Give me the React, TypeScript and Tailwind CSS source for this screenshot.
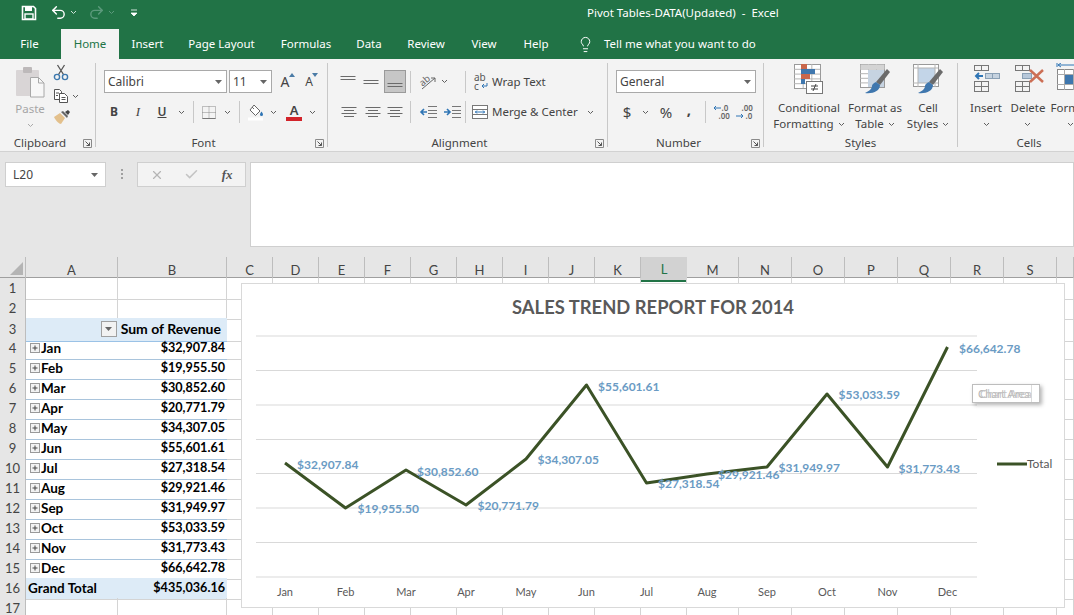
import React from "react";
import { Lightbulb, Redo2, Undo2, X, Check } from "lucide-react";

const pivotRows = [
  ["Jan", "$32,907.84"],
  ["Feb", "$19,955.50"],
  ["Mar", "$30,852.60"],
  ["Apr", "$20,771.79"],
  ["May", "$34,307.05"],
  ["Jun", "$55,601.61"],
  ["Jul", "$27,318.54"],
  ["Aug", "$29,921.46"],
  ["Sep", "$31,949.97"],
  ["Oct", "$53,033.59"],
  ["Nov", "$31,773.43"],
  ["Dec", "$66,642.78"],
];

const columns = ["A", "B", "C", "D", "E", "F", "G", "H", "I", "J", "K", "L", "M", "N", "O", "P", "Q", "R", "S", ""];

// точки графика в координатах страницы
const points = [
  { m: "Jan", x: 285, y: 463, lx: 297, ly: 469, t: "$32,907.84" },
  { m: "Feb", x: 345.5, y: 508, lx: 357.5, ly: 513, t: "$19,955.50" },
  { m: "Mar", x: 406, y: 470, lx: 417, ly: 476, t: "$30,852.60" },
  { m: "Apr", x: 466, y: 505, lx: 477.5, ly: 510, t: "$20,771.79" },
  { m: "May", x: 526, y: 459, lx: 537.5, ly: 464, t: "$34,307.05" },
  { m: "Jun", x: 586.5, y: 385, lx: 598, ly: 391, t: "$55,601.61" },
  { m: "Jul", x: 646.5, y: 483, lx: 658, ly: 488, t: "$27,318.54" },
  { m: "Aug", x: 707, y: 474, lx: 718, ly: 479, t: "$29,921.46" },
  { m: "Sep", x: 767, y: 467, lx: 778.5, ly: 472, t: "$31,949.97" },
  { m: "Oct", x: 827, y: 394, lx: 838.5, ly: 399, t: "$53,033.59" },
  { m: "Nov", x: 887.5, y: 467, lx: 898.5, ly: 473, t: "$31,773.43" },
  { m: "Dec", x: 947.5, y: 347, lx: 959, ly: 353, t: "$66,642.78" },
];

const gridLines = [336, 370.5, 405, 439.5, 473.5, 508, 542.5, 577];

const Chev = ({ c = "#5f5f5f" }: { c?: string }) => (
  <svg width="7" height="5" viewBox="0 0 7 5" className="shrink-0">
    <path d="M1 1l2.5 2.5L6 1" fill="none" stroke={c} strokeWidth="1" />
  </svg>
);

const ComboArrow = () => (
  <svg width="7" height="4" viewBox="0 0 7 4" className="shrink-0">
    <path d="M0 0h7L3.5 4z" fill="#666" />
  </svg>
);

const Launcher = () => (
  <svg width="9" height="9" viewBox="0 0 9 9" className="absolute right-[3px] top-[4px]">
    <path d="M.5 8.5v-8h8v8z" fill="none" stroke="#8a8a8a" />
    <path d="M2.5 2.5l4 4M3.5 6.5h3v-3" fill="none" stroke="#555" />
  </svg>
);

const Sep = () => <div className="h-[22px] w-px shrink-0 bg-[#c8c8c8]" />;

const GroupSep = () => <div className="mt-[4px] h-[84px] w-px shrink-0 bg-[#c8c8c8]" />;

const Lines = ({ rows }: { rows: [number, number][] }) => (
  <svg width="18" height="14" viewBox="0 0 18 14">
    {rows.map(([y, w], i) => (
      <path key={i} d={`M${(18 - w) / 2} ${y}.5h${w}`} stroke="#6a6a6a" />
    ))}
  </svg>
);

const Indent = ({ right }: { right?: boolean }) => (
  <svg width="18" height="12" viewBox="0 0 18 12">
    <path d="M9 .5h9M9 4.5h9M9 7.5h9M9 11.5h9" stroke="#777" />
    {right ? (
      <path d="M1 6h5M4 3l3 3-3 3" fill="none" stroke="#2f75b5" strokeWidth="1.6" />
    ) : (
      <path d="M8 6H3M5 3L2 6l3 3" fill="none" stroke="#2f75b5" strokeWidth="1.6" />
    )}
  </svg>
);

const GroupLabel = ({ label, launcher, className = "" }: { label: string; launcher?: boolean; className?: string }) => (
  <div className={`relative h-[16px] text-center text-[11.5px] leading-[16px] text-[#444] ${className}`}>
    {label}
    {launcher && <Launcher />}
  </div>
);

const PasteIcon = () => (
  <svg width="30" height="32" viewBox="0 0 30 32">
    <rect x="1" y="4" width="23" height="26" rx="1" fill="#d9d5d6" />
    <rect x="8" y="1" width="9" height="6" rx="1" fill="#bdb9ba" />
    <path d="M15.5 11.5h8l5.500 5.500v14h-13.500z" fill="#f7f7f7" stroke="#a8a8a8" />
    <path d="M23.500 11.500v5.500h5.500" fill="none" stroke="#a8a8a8" />
  </svg>
);

const ScissorsIcon = () => (
  <svg width="16" height="17" viewBox="0 0 16 17">
    <path d="M5.500 10.500L11.500 1M10.500 10.500L4.500 1" fill="none" stroke="#555" strokeWidth="1.300" />
    <circle cx="4" cy="13" r="2.600" fill="none" stroke="#3d78ad" strokeWidth="1.400" />
    <circle cx="12" cy="13" r="2.600" fill="none" stroke="#3d78ad" strokeWidth="1.400" />
  </svg>
);

const CopyIcon = () => (
  <svg width="16" height="16" viewBox="0 0 16 16">
    <path d="M1.500 1.500h5l2 2v8h-7z" fill="#fff" stroke="#555" />
    <path d="M6.500 5.500h5l3 3v6h-8z" fill="#fff" stroke="#555" />
    <path d="M3 5h3M3 7.500h2M8.500 9.500h4M8.500 11.500h4" stroke="#555" />
  </svg>
);

const BrushIcon = () => (
  <svg width="18" height="16" viewBox="0 0 18 16">
    <path d="M1 8l6-4 5 5-4 6c-2 0-5-3-7-7z" fill="#e3c08c" />
    <path d="M8 3l2-1 5 5-1 2z" fill="#666" />
    <path d="M12 3l3-2 2 2-2 3z" fill="#444" />
  </svg>
);

const FillIcon = () => (
  <svg width="17" height="17" viewBox="0 0 17 17">
    <path d="M6 1l6 6-4.500 4.500L2 6z" fill="#fff" stroke="#666" />
    <path d="M4 3l2 2" stroke="#666" />
    <path d="M13.500 7.500c1 1.500 1.500 2.200 1.500 3a1.500 1.500 0 0 1-3 0c0-.8.5-1.500 1.500-3z" fill="#2f75b5" />
    <rect x="0" y="13.500" width="15" height="3" fill="#fff" />
  </svg>
);

const BorderIcon = () => (
  <svg width="14" height="13" viewBox="0 0 14 13">
    <rect x=".5" y=".5" width="13" height="12" fill="none" stroke="#888" strokeDasharray="1 1" />
    <path d="M7 .5v12M.5 6.500h13" stroke="#888" strokeDasharray="1 1" />
    <path d="M.5 12.500h13" stroke="#777" />
  </svg>
);

const OrientIcon = () => (
  <svg width="20" height="16" viewBox="0 0 20 16" className="overflow-visible">
    <text x="3" y="10" fontSize="9.500" fill="#666" transform="rotate(-40 8 8)" fontFamily="Noto Sans, sans-serif">ab</text>
    <path d="M5 15L18 4M14 4h4v4" fill="none" stroke="#666" />
  </svg>
);

const WrapIcon = () => (
  <span className="relative block h-[18px] w-[14px] text-[10px] leading-[9px] text-[#555]">
    ab
    <br />c
    <svg width="7" height="6" viewBox="0 0 7 6" className="absolute left-[7px] top-[10px]">
      <path d="M6 0v3H1M3 1L1 3l2 2" fill="none" stroke="#2f75b5" />
    </svg>
  </span>
);

const MergeIcon = () => (
  <svg width="16" height="14" viewBox="0 0 16 14">
    <rect x=".5" y=".5" width="15" height="13" fill="#fff" stroke="#777" />
    <path d="M.5 4.500h15M.5 9.500h15" stroke="#777" />
    <path d="M3 7h10M5 5.500L3.500 7 5 8.500M11 5.500L12.500 7 11 8.500" fill="none" stroke="#2f75b5" />
  </svg>
);

const DecimalIcon = ({ more }: { more?: boolean }) => (
  <span className="relative block h-[16px] w-[19px] text-[8px] font-semibold leading-[8px] text-[#666]">
    {more ? (
      <>
        <span className="block pl-[9px]">.0</span>
        <span className="block pl-[6px]">.00</span>
        <svg width="8" height="6" viewBox="0 0 8 6" className="absolute left-0 top-[1px]">
          <path d="M8 3H1M3 1L1 3l2 2" fill="none" stroke="#2f75b5" />
        </svg>
      </>
    ) : (
      <>
        <span className="block pl-[6px]">.00</span>
        <span className="block pl-[10px]">.0</span>
        <svg width="8" height="6" viewBox="0 0 8 6" className="absolute left-0 top-[9px]">
          <path d="M0 3h7M5 1l2 2-2 2" fill="none" stroke="#2f75b5" />
        </svg>
      </>
    )}
  </span>
);

const TableGrid = ({ x, y, w, h, cols, rows }: { x: number; y: number; w: number; h: number; cols: number; rows: number }) => (
  <g>
    <rect x={x + 0.5} y={y + 0.5} width={w} height={h} fill="#fff" stroke="#9a9a9a" />
    {Array.from({ length: cols - 1 }).map((_, i) => (
      <path key={i} d={`M${x + 0.5 + ((i + 1) * w) / cols} ${y}v${h}`} stroke="#b5b5b5" />
    ))}
    {Array.from({ length: rows - 1 }).map((_, i) => (
      <path key={i} d={`M${x} ${y + 0.5 + ((i + 1) * h) / rows}h${w}`} stroke="#b5b5b5" />
    ))}
  </g>
);

const CondFormatIcon = () => (
  <svg width="32" height="32" viewBox="0 0 32 32">
    <TableGrid x={1} y={1} w={26} h={24} cols={3} rows={5} />
    <rect x="8" y="1" width="6" height="5" fill="#c9674c" />
    <rect x="8" y="6" width="14" height="5" fill="#3f77ae" />
    <rect x="8" y="11" width="9" height="5" fill="#c9674c" />
    <rect x="8" y="16" width="4" height="5" fill="#3f77ae" />
    <rect x="13.500" y="18.500" width="16" height="12" fill="#fff" stroke="#777" />
    <path d="M18 23h7M18 26h7M23 21l-3 7" fill="none" stroke="#444" />
  </svg>
);

const BrushOverlay = () => (
  <>
    <path d="M28 6L31 9L21 22L17 19z" fill="#6b6b6b" />
    <path d="M17 19L21 22C21 28 14 31 6 30C10 28 13 26 13 23C13 21 15 20 17 19z" fill="#3f77ae" />
  </>
);

const FormatTableIcon = () => (
  <svg width="32" height="32" viewBox="0 0 32 32">
    <TableGrid x={1} y={1} w={24} h={23} cols={3} rows={5} />
    <rect x="1.500" y="1.500" width="24" height="5" fill="#d4d4d4" />
    <rect x="9" y="7" width="16" height="17" fill="#c6d3e1" />
    <BrushOverlay />
  </svg>
);

const CellStylesIcon = () => (
  <svg width="32" height="32" viewBox="0 0 32 32">
    <rect x="1.500" y="1.500" width="25" height="22" fill="#fff" stroke="#9a9a9a" />
    <rect x="6" y="5" width="17" height="15" fill="#c3d5e8" />
    <path d="M6 1v23M1 5h25M1 20h25M23 1v23" stroke="#b5b5b5" fill="none" />
    <BrushOverlay />
  </svg>
);

const InsertIcon = () => (
  <svg width="30" height="32" viewBox="0 0 30 32">
    <rect x="3.500" y="2.500" width="14" height="5" fill="none" stroke="#777" />
    <path d="M10.500 2.500v5" stroke="#777" />
    <rect x="14.500" y="10.500" width="14" height="5" fill="#c5d2df" stroke="#8aa0b5" />
    <path d="M21.500 10.500v5" stroke="#8aa0b5" />
    <path d="M12 13H5M8 10l-3 3 3 3" fill="none" stroke="#2f75b5" strokeWidth="2" />
    <rect x="3.500" y="18.500" width="14" height="10" fill="none" stroke="#777" />
    <path d="M10.500 18.500v10M3.500 23.500h14" stroke="#777" />
  </svg>
);

const DeleteIcon = () => (
  <svg width="32" height="32" viewBox="0 0 32 32">
    <rect x="3.500" y="2.500" width="14" height="5" fill="none" stroke="#777" />
    <path d="M10.500 2.500v5" stroke="#777" />
    <rect x="10.500" y="10.500" width="9" height="5" fill="#b7c8da" stroke="#8aa0b5" />
    <rect x="3.500" y="18.500" width="14" height="10" fill="none" stroke="#777" />
    <path d="M10.500 18.500v10M3.500 23.500h14" stroke="#777" />
    <path d="M18 7l13 12M31 7L18 19" fill="none" stroke="#cc6f55" strokeWidth="2.500" />
  </svg>
);

const FormatIcon = () => (
  <svg width="32" height="32" viewBox="0 0 32 32">
    <path d="M3 0v4M4 2h26M4 2l3-2M4 2l3 2" fill="none" stroke="#2f75b5" />
    <rect x="3.500" y="6.500" width="28" height="20" fill="#fff" stroke="#888" />
    <rect x="11" y="11" width="8" height="10" fill="#3f77ae" />
    <path d="M10.500 6v21M19.500 6v21M3 11.500h28M3 21.500h28" stroke="#aaa" />
  </svg>
);

const BigButton = ({ className, lines, icon, chevInline }: { className: string; lines: string[]; icon: React.ReactNode; chevInline?: boolean }) => (
  <div className={`flex shrink-0 flex-col items-center ${className}`}>
    <div className="flex h-[33px] items-center justify-center pt-[7px]">{icon}</div>
    <div className="mt-[8px] text-center leading-[16px]">
      <div className="whitespace-nowrap">{lines[0]}</div>
      {chevInline ? (
        <div className="flex items-center justify-center gap-[4px] whitespace-nowrap">
          {lines[1]} <Chev />
        </div>
      ) : (
        <div className="flex h-[16px] items-center justify-center">
          <Chev />
        </div>
      )}
    </div>
  </div>
);

const Ribbon = () => (
  <div className="flex h-[93px] overflow-hidden border-b border-[#d2d2d2] bg-[#f3f3f3] text-[11.5px] text-[#444]">
    {/* Clipboard */}
    <div className="flex w-[95px] shrink-0 flex-col">
      <div className="flex h-[76px]">
        <div className="ml-[15px] flex w-[30px] flex-col items-center pt-[7px]">
          <PasteIcon />
          <div className="mt-[2px] text-[#a6a6a6]">Paste</div>
          <div className="mt-[6px]">
            <Chev c="#aaa" />
          </div>
        </div>
        <div className="ml-[8px] flex flex-col pt-[4px]">
          <div className="flex h-[18px] w-[16px] items-center justify-center">
            <ScissorsIcon />
          </div>
          <div className="mt-[3px] flex h-[24px] items-center">
            <CopyIcon />
            <span className="ml-[3px]">
              <Chev />
            </span>
          </div>
          <div className="flex h-[18px] w-[18px] items-center justify-center">
            <BrushIcon />
          </div>
        </div>
      </div>
      <GroupLabel label="Clipboard" launcher className="pr-[15px]" />
    </div>
    <GroupSep />

    {/* Font */}
    <div className="flex w-[231px] shrink-0 flex-col">
      <div className="h-[76px] pl-[8px] pt-[11px]">
        <div className="flex h-[23px] items-stretch">
          <div className="flex w-[123px] items-center justify-between border border-[#a9a9a9] bg-white pl-[3px] pr-[4px] text-[12px]">
            Calibri
            <ComboArrow />
          </div>
          <div className="ml-[2px] flex w-[43px] items-center justify-between border border-[#a9a9a9] bg-white pl-[3px] pr-[4px] text-[12px]">
            11
            <ComboArrow />
          </div>
          <div className="relative flex w-[26px] items-center justify-center text-[14px]">
            A
            <svg width="6" height="4" viewBox="0 0 6 4" className="absolute right-[3px] top-[3px]">
              <path d="M0 4h6L3 0z" fill="#4a7ba6" />
            </svg>
          </div>
          <div className="relative flex w-[22px] items-center justify-center text-[12px]">
            A
            <svg width="6" height="4" viewBox="0 0 6 4" className="absolute right-[2px] top-[3px]">
              <path d="M0 0h6L3 4z" fill="#4a7ba6" />
            </svg>
          </div>
        </div>
        <div className="mt-[8px] flex h-[22px] items-center">
          <div className="w-[20px] text-center text-[12px] font-bold">B</div>
          <div className="w-[28px] text-center font-['Liberation_Serif',serif] text-[13px] italic">I</div>
          <div className="w-[20px] text-center text-[12px] font-semibold underline">U</div>
          <div className="flex w-[18px] justify-center">
            <Chev />
          </div>
          <div className="flex w-[6px] justify-center">
            <Sep />
          </div>
          <div className="flex w-[26px] justify-center">
            <BorderIcon />
          </div>
          <div className="flex w-[10px] justify-center">
            <Chev />
          </div>
          <div className="flex w-[14px] justify-center">
            <Sep />
          </div>
          <div className="flex w-[20px] justify-center">
            <FillIcon />
          </div>
          <div className="flex w-[14px] justify-center">
            <Chev />
          </div>
          <div className="flex w-[28px] flex-col items-center">
            <span className="text-[13px] font-semibold leading-[13px]">A</span>
            <span className="h-[4px] w-[16px] bg-[#d2232a]" />
          </div>
          <div className="flex w-[8px] justify-center">
            <Chev />
          </div>
        </div>
      </div>
      <GroupLabel label="Font" launcher className="pr-[16px]" />
    </div>
    <GroupSep />

    {/* Alignment */}
    <div className="flex w-[279px] shrink-0 flex-col">
      <div className="h-[76px] pl-[8px] pt-[11px]">
        <div className="flex h-[23px] items-center">
          <div className="flex w-[23px] justify-center">
            <Lines rows={[[1, 15], [4, 15]]} />
          </div>
          <div className="flex w-[24px] justify-center">
            <Lines rows={[[5, 15], [8, 15]]} />
          </div>
          <div className="ml-[1px] flex h-[23px] w-[22px] items-end justify-center border border-[#9a9a9a] bg-[#c6c6c6] pb-[3px]">
            <Lines rows={[[8, 15], [11, 15]]} />
          </div>
          <div className="flex w-[8px] justify-center">
            <Sep />
          </div>
          <div className="flex w-[26px] justify-center">
            <OrientIcon />
          </div>
          <div className="flex w-[8px] justify-center">
            <Chev />
          </div>
          <div className="ml-[9px] flex w-[16px] justify-center">
            <Sep />
          </div>
          <div className="flex w-[16px] justify-center">
            <WrapIcon />
          </div>
          <div className="ml-[3px] whitespace-nowrap">Wrap Text</div>
        </div>
        <div className="mt-[8px] flex h-[22px] items-center">
          <div className="flex w-[25px] justify-center">
            <Lines rows={[[2, 15], [5, 10], [8, 15], [11, 10]]} />
          </div>
          <div className="flex w-[23px] justify-center">
            <Lines rows={[[2, 15], [5, 10], [8, 15], [11, 10]]} />
          </div>
          <div className="flex w-[22px] justify-center">
            <Lines rows={[[2, 15], [5, 10], [8, 15], [11, 10]]} />
          </div>
          <div className="flex w-[8px] justify-center">
            <Sep />
          </div>
          <div className="flex w-[28px] justify-center">
            <Indent />
          </div>
          <div className="flex w-[20px] justify-center">
            <Indent right />
          </div>
          <div className="flex w-[6px] justify-center">
            <Sep />
          </div>
          <div className="flex w-[24px] justify-center">
            <MergeIcon />
          </div>
          <div className="w-[95px] whitespace-nowrap">Merge &amp; Center</div>
          <Chev />
        </div>
      </div>
      <GroupLabel label="Alignment" launcher className="pr-[16px]" />
    </div>
    <GroupSep />

    {/* Number */}
    <div className="flex w-[155px] shrink-0 flex-col">
      <div className="h-[76px] pl-[8px] pt-[11px]">
        <div className="flex h-[23px] w-[140px] items-center justify-between border border-[#a9a9a9] bg-white pl-[3px] pr-[4px] text-[12px]">
          General
          <ComboArrow />
        </div>
        <div className="mt-[8px] flex h-[22px] items-center">
          <div className="w-[22px] text-center text-[15px]">$</div>
          <div className="flex w-[14px] justify-center">
            <Chev />
          </div>
          <div className="w-[28px] text-center text-[15px]">%</div>
          <div className="w-[18px] pb-[6px] text-center text-[15px] font-bold">,</div>
          <div className="flex w-[14px] justify-center">
            <Sep />
          </div>
          <div className="flex w-[20px] justify-center">
            <DecimalIcon more />
          </div>
          <div className="flex w-[26px] justify-center">
            <DecimalIcon />
          </div>
        </div>
      </div>
      <GroupLabel label="Number" launcher className="pr-[14px]" />
    </div>
    <GroupSep />

    {/* Styles */}
    <div className="flex w-[193px] shrink-0 flex-col">
      <div className="flex h-[76px] pl-[10px]">
        <BigButton className="w-[70px]" lines={["Conditional", "Formatting"]} icon={<CondFormatIcon />} chevInline />
        <BigButton className="w-[62px]" lines={["Format as", "Table"]} icon={<FormatTableIcon />} chevInline />
        <BigButton className="w-[44px]" lines={["Cell", "Styles"]} icon={<CellStylesIcon />} chevInline />
      </div>
      <GroupLabel label="Styles" />
    </div>
    <GroupSep />

    {/* Cells */}
    <div className="flex w-[142px] shrink-0 flex-col">
      <div className="flex h-[76px] pl-[6px]">
        <BigButton className="w-[44px]" lines={["Insert"]} icon={<InsertIcon />} />
        <BigButton className="w-[40px]" lines={["Delete"]} icon={<DeleteIcon />} />
        <BigButton className="w-[44px]" lines={["Format"]} icon={<FormatIcon />} />
      </div>
      <GroupLabel label="Cells" />
    </div>
  </div>
);

const FormulaBar = () => (
  <div className="flex h-[105px] items-start bg-[#e6e6e6] pt-[10px]">
    <div className="ml-[5px] flex h-[25px] w-[101px] items-center justify-between border border-[#cfcfcf] bg-white pl-[7px] pr-[7px] text-[12px] text-[#444]">
      L20
      <ComboArrow />
    </div>
    <div className="flex w-[31px] flex-col items-center gap-[2px] pt-[7px]">
      <span className="h-[2px] w-[2px] bg-[#a0a0a0]" />
      <span className="h-[2px] w-[2px] bg-[#a0a0a0]" />
      <span className="h-[2px] w-[2px] bg-[#a0a0a0]" />
    </div>
    <div className="flex h-[25px] w-[109px] items-center border border-[#cfcfcf] bg-[#f3f3f3]">
      <div className="flex w-[36px] justify-center pl-[2px]">
        <X size={14} strokeWidth={2} className="text-[#b5b5b5]" />
      </div>
      <div className="flex w-[36px] justify-center">
        <Check size={15} strokeWidth={2.4} className="text-[#c4c4c4]" />
      </div>
      <div className="w-[36px] text-center font-['Liberation_Serif',serif] text-[13px] font-bold italic text-[#555]">fx</div>
    </div>
    <div className="ml-[4px] h-[85px] flex-1 border border-[#cfcfcf] bg-white" />
  </div>
);

const gridCols =
  "grid grid-cols-[26px_92px_109px_46px_46px_46px_46px_46px_46px_46px_46px_46px_46px_52px_53px_53px_53px_53px_53px_53px_1fr]";

const ExpandBox = () => (
  <svg width="10" height="10" viewBox="0 0 10 10" className="shrink-0">
    <rect x=".5" y=".5" width="9" height="9" fill="#f2f2f2" stroke="#9a9a9a" />
    <path d="M2.500 5h5M5 2.500v5" stroke="#444" />
  </svg>
);

const Sheet = () => {
  const rowNumbers = Array.from({ length: 17 }, (_, i) => i + 1);
  return (
    <div className="relative font-['Lato',sans-serif] text-[13px] text-black">
      <div className={`${gridCols} h-[21px] border-b border-[#9f9f9f] bg-[#e6e6e6]`}>
        <div className="relative border-r border-[#bdbdbd]">
          <svg width="13" height="13" viewBox="0 0 13 13" className="absolute left-[10px] top-[5px]">
            <path d="M13 0v13H0z" fill="#b4b4b4" />
          </svg>
        </div>
        {columns.map((c) =>
          c === "L" ? (
            <div key={c} className="flex items-center justify-center border-b-2 border-[#217346] bg-[#d2d2d2] pt-[3px] text-[#217346]">
              {c}
            </div>
          ) : (
            <div key={c} className="flex items-center justify-center border-r border-[#bdbdbd] pt-[2px] text-[#444]">
              {c}
            </div>
          ),
        )}
      </div>
      {rowNumbers.map((r) => {
        const pivot = r >= 4 && r <= 15 ? pivotRows[r - 4] : null;
        return (
          <div key={r} className={`${gridCols} h-[20px]`}>
            <div className="flex items-center justify-center border-b border-r border-[#bdbdbd] bg-[#e6e6e6] pt-[1px] text-[#444]">{r}</div>
            {r === 3 ? (
              <div className="col-span-2 flex items-center justify-end border-b border-[#9bc2e6] bg-[#ddebf7] pb-[2px] pr-[6px] text-[14px] font-bold">
                <span className="mr-[4px] flex h-[16px] w-[16px] items-center justify-center border border-[#a0a0a0] bg-[#f2f2f2]">
                  <svg width="7" height="4" viewBox="0 0 7 4">
                    <path d="M0 0h7L3.500 4z" fill="#666" />
                  </svg>
                </span>
                Sum of Revenue
              </div>
            ) : pivot ? (
              <div className="col-span-2 flex items-center justify-between border-b border-[#a9c4dc] pb-[1px] pl-[4px] pr-[2px] text-[12.6px] font-bold">
                <span className="flex items-center gap-[1px] text-[13.5px]">
                  <ExpandBox />
                  {pivot[0]}
                </span>
                {pivot[1]}
              </div>
            ) : r === 16 ? (
              <div className="col-span-2 flex items-center justify-between border-b border-[#d4d4d4] bg-[#ddebf7] pb-[1px] pl-[2px] pr-[2px] text-[12.6px] font-bold">
                <span className="text-[13.5px]">Grand Total</span>
                $435,036.16
              </div>
            ) : (
              <>
                <div className="border-b border-r border-[#d4d4d4]" />
                <div className="border-b border-r border-[#d4d4d4]" />
              </>
            )}
            {columns.slice(2).map((c) => (
              <div key={c} className="border-b border-r border-[#d4d4d4]" />
            ))}
          </div>
        );
      })}

      {/* Диаграмма поверх листа */}
      <div className="absolute left-[241px] top-[26px] h-[325px] w-[824px] border border-[#d9d9d9] bg-white">
        <svg width="824" height="325" viewBox="241 283 824 325" className="absolute -left-px -top-px">
          {gridLines.map((y) => (
            <path key={y} d={`M256 ${y}H977`} stroke="#d9d9d9" strokeWidth="1" />
          ))}
          <polyline
            points={points.map((p) => `${p.x},${p.y}`).join(" ")}
            fill="none"
            stroke="#3b5226"
            strokeWidth="3"
            strokeLinejoin="round"
          />
          {points.map((p) => (
            <text key={p.t} x={p.lx} y={p.ly} fontSize="12" fontWeight="700" fill="#6a9bc4" fontFamily="Lato, sans-serif">
              {p.t}
            </text>
          ))}
          {points.map((p) => (
            <text key={p.m} x={p.x} y={596} fontSize="11" fill="#595959" textAnchor="middle" fontFamily="Lato, sans-serif">
              {p.m}
            </text>
          ))}
          <path d="M997 464h30" stroke="#3b5226" strokeWidth="3" />
          <text x="1027" y="468" fontSize="12" fill="#595959" fontFamily="Lato, sans-serif">
            Total
          </text>
        </svg>
        <div className="relative pt-[11px] text-center text-[18.4px] font-bold leading-[24px] text-[#595959]">SALES TREND REPORT FOR 2014</div>
        <div className="absolute left-[730px] top-[100px] h-[19px] w-[68px] border border-[#bdbdbd] bg-white shadow-[2px_2px_4px_rgba(0,0,0,0.3)]">
          <div className="absolute bottom-0 right-[7px] top-0 w-px bg-[#dcdcdc]" />
          <span className="absolute left-[5px] top-[2px] whitespace-nowrap text-[11px] leading-[14px] text-[#b5b5b5]">Chart Area</span>
          <span className="absolute left-[7px] top-[2px] whitespace-nowrap text-[11px] leading-[14px] text-[#c4c4c4]">Chart Area</span>
        </div>
      </div>
    </div>
  );
};

export default function App() {
  return (
    <div className="h-[615px] w-[1074px] overflow-hidden bg-white font-['Noto_Sans',sans-serif]">
      {/* Заголовок окна */}
      <div className="flex h-[29px] items-center bg-[#217346] pb-[4px] text-[11.5px] text-white">
        <div className="flex w-[587px] shrink-0 items-center">
          <svg width="16" height="16" viewBox="0 0 16 16" className="ml-[21px]">
            <path d="M1.500 1.500h11l2 2v11h-13z" fill="none" stroke="#fff" strokeWidth="1.600" />
            <rect x="4" y="2" width="7" height="4" fill="#fff" />
            <rect x="4" y="9" width="8" height="5" fill="none" stroke="#fff" strokeWidth="1.400" />
          </svg>
          <Undo2 size={17} strokeWidth={2} className="ml-[13px]" />
          <span className="ml-[3px]">
            <Chev c="#cfe3d8" />
          </span>
          <Redo2 size={17} strokeWidth={2} className="ml-[11px] text-[#5c9a7c]" />
          <span className="ml-[3px]">
            <Chev c="#5c9a7c" />
          </span>
          <svg width="8" height="8" viewBox="0 0 8 8" className="ml-[15px]">
            <path d="M1 1h6M1 4h6l-3 3z" fill="#fff" stroke="#fff" strokeWidth=".8" />
          </svg>
        </div>
        <span className="whitespace-pre">Pivot Tables-DATA(Updated)  -  Excel</span>
      </div>

      {/* Вкладки */}
      <div className="flex h-[30px] items-center bg-[#217346] text-[11.5px] text-white">
        <div className="w-[61px] pr-[2px] text-center">File</div>
        <div className="flex h-[30px] w-[58px] items-center justify-center bg-[#f3f3f3] text-[#217346]">Home</div>
        <div className="w-[57px] text-center">Insert</div>
        <div className="w-[91px] text-center">Page Layout</div>
        <div className="w-[78px] text-center">Formulas</div>
        <div className="w-[48px] text-center">Data</div>
        <div className="w-[66px] text-center">Review</div>
        <div className="w-[50px] text-center">View</div>
        <div className="w-[54px] text-center">Help</div>
        <Lightbulb size={17} strokeWidth={1.4} className="ml-[14px]" />
        <span className="ml-[10px] whitespace-nowrap">Tell me what you want to do</span>
      </div>

      <Ribbon />
      <FormulaBar />
      <Sheet />
    </div>
  );
}
